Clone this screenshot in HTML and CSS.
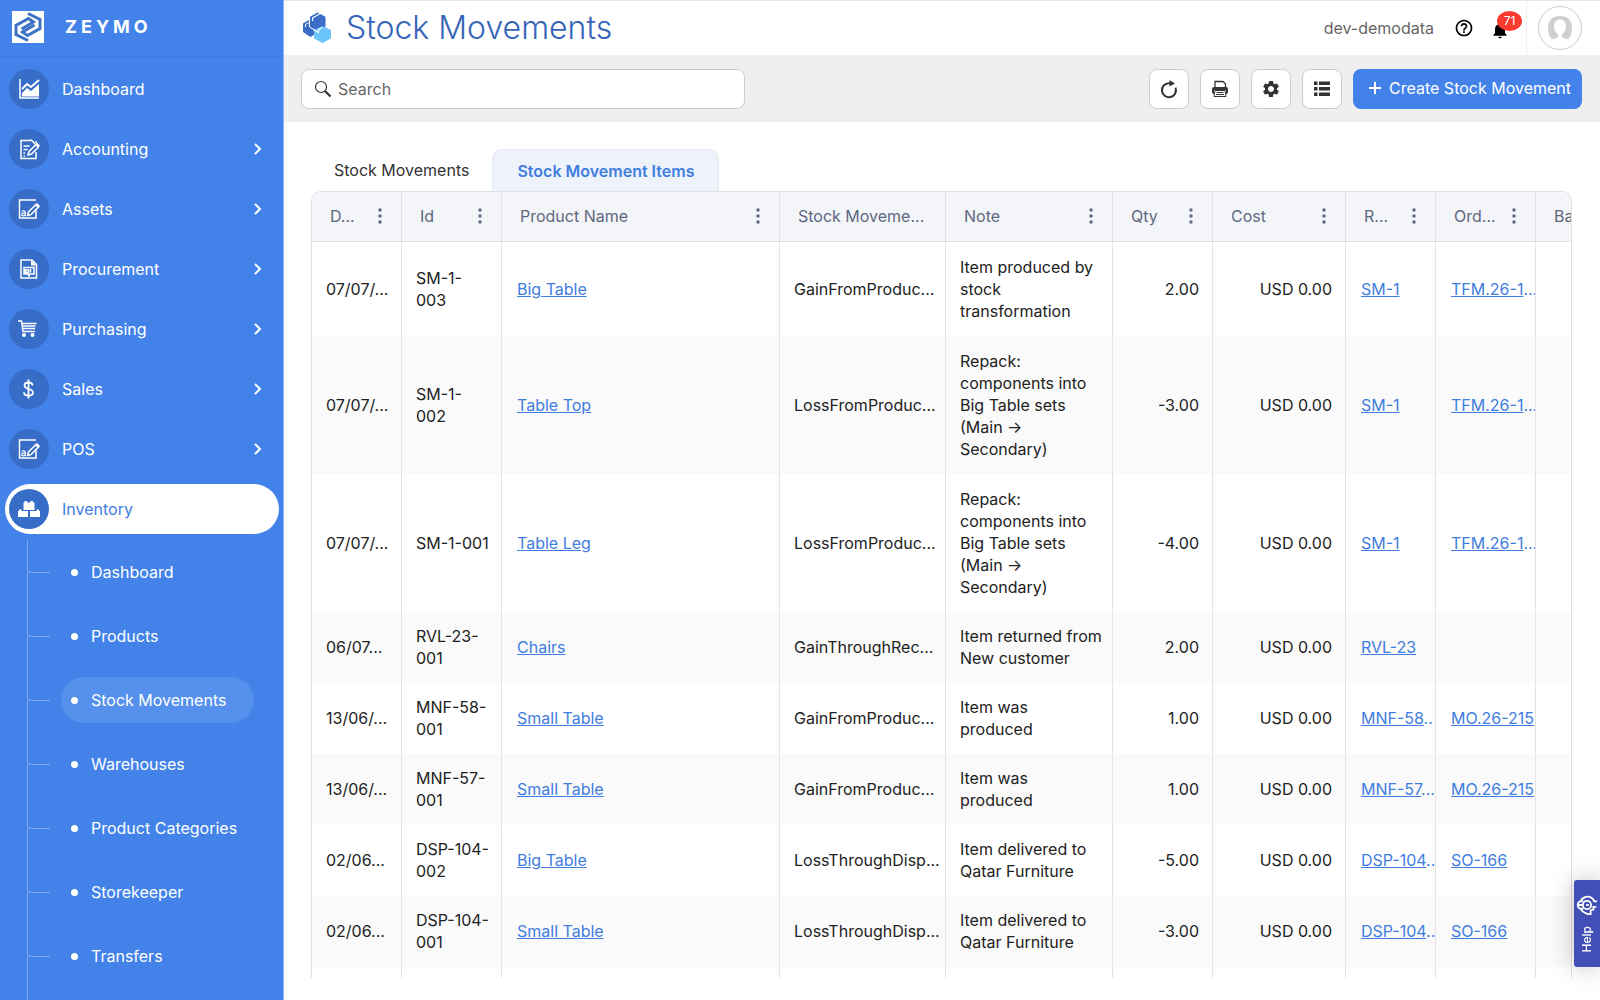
FILE: index.html
```html
<!DOCTYPE html>
<html lang="en">
<head>
<meta charset="utf-8">
<title>Stock Movements - Zeymo</title>
<meta name="viewport" content="width=device-width, initial-scale=1">
<link rel="stylesheet" href="styles.css">
</head>
<body>
<svg class="sprite" aria-hidden="true">
  <symbol id="chevron" viewBox="0 0 10 14"><path d="M2 2l5 5-5 5" fill="none" stroke="currentColor" stroke-width="2"/></symbol>
  <symbol id="sign" viewBox="0 0 22 22"><path d="M18 12v8H1.500V2H18" fill="none" stroke="currentColor" stroke-width="1.500"/><path d="M9.500 17.500l1-3.500 7.500-7.500 2.500 2.500-7.500 7.500z" fill="none" stroke="currentColor" stroke-width="1.500"/><path d="M17 7l2-2 3 3-2 2z" fill="currentColor"/><path d="M4 13.500c1-1 3.300-.8 3.300.8V18M7.300 15.300c-2-.3-3.600.2-3.600 1.400 0 1.700 2.900 1.500 3.600-.2" fill="none" stroke="currentColor" stroke-width="1.200"/></symbol>
  <symbol id="dots" viewBox="0 0 4 16"><circle cx="2" cy="2" r="1.700"/><circle cx="2" cy="8" r="1.700"/><circle cx="2" cy="14" r="1.700"/></symbol>
</svg>
<div class="app">
  <aside class="sidebar">
    <div class="brand">
      <svg class="brand-logo" viewBox="0 0 32 32" aria-hidden="true"><rect width="32" height="32" fill="#fff"/><path d="M16 2.500l12 6v9L15.500 24.500l-5-3.500 12-7M16 29.500l-12-6v-9L16.500 7.500l5 3.500-12 7" fill="none" stroke="#3f72c4" stroke-width="3"/></svg>
      <span class="brand-name">ZEYMO</span>
    </div>
    <nav class="menu">
      <a class="item" href="#"><span class="disc"><svg viewBox="0 0 22 22"><path d="M2 1v19h19" fill="none" stroke="currentColor" stroke-width="1.500"/><path d="M4 11l5-5 4 3 8-7" fill="none" stroke="currentColor" stroke-width="2"/><path d="M4 18.500V15l5-5 4 3 8-7v12.500z" fill="currentColor"/></svg></span><span class="label">Dashboard</span></a>
      <a class="item" href="#"><span class="disc"><svg viewBox="0 0 22 22"><path d="M18 14v6.500H3v-18h10M18 3v2" fill="none" stroke="currentColor" stroke-width="1.500"/><path d="M5.500 8h6M5.500 11.500h4M5.500 15h1.500M5.500 18h1.500" stroke="currentColor" stroke-width="1.500"/><path d="M10 17l1-3.500 7-7 2.500 2.500-7 7zM13 1.500L17 6" fill="none" stroke="currentColor" stroke-width="1.500"/><path d="M17 7l2-2.500 3 3-2 2z" fill="currentColor"/></svg></span><span class="label">Accounting</span><svg class="chev"><use href="#chevron"/></svg></a>
      <a class="item" href="#"><span class="disc"><svg><use href="#sign"/></svg></span><span class="label">Assets</span><svg class="chev"><use href="#chevron"/></svg></a>
      <a class="item" href="#"><span class="disc"><svg viewBox="0 0 22 22"><path d="M3 2h11l4.500 4.500V20H3z" fill="none" stroke="currentColor" stroke-width="1.500"/><path d="M13 2v5.500h5.500z" fill="currentColor"/><path d="M6 9.500h10v6.500h-4l-1 2-1-2H6zM7.500 12h3v2.500h-3zM12.500 11v3.500" fill="none" stroke="currentColor" stroke-width="1.500"/></svg></span><span class="label">Procurement</span><svg class="chev"><use href="#chevron"/></svg></a>
      <a class="item" href="#"><span class="disc"><svg viewBox="0 0 22 22"><path d="M0 3h3.500L5 13.500h12M4.500 5.500h14M5 8h12.500M5.500 10.500h11.500" fill="none" stroke="currentColor" stroke-width="1.500"/><circle cx="6" cy="17" r="2" fill="currentColor"/><circle cx="14.500" cy="17" r="2" fill="currentColor"/></svg></span><span class="label">Purchasing</span><svg class="chev"><use href="#chevron"/></svg></a>
      <a class="item" href="#"><span class="disc"><svg viewBox="0 0 22 22"><path d="M14.500 7.500c0-2-1.800-3-4-3s-4 1-4 3c0 4.500 8.500 2.500 8.500 7 0 2-2 3.200-4.500 3.200s-4.500-1.200-4.500-3.400M10.500 1.500v19" fill="none" stroke="currentColor" stroke-width="1.800"/></svg></span><span class="label">Sales</span><svg class="chev"><use href="#chevron"/></svg></a>
      <a class="item" href="#"><span class="disc"><svg><use href="#sign"/></svg></span><span class="label">POS</span><svg class="chev"><use href="#chevron"/></svg></a>
      <a class="item active" href="#"><span class="disc"><svg viewBox="0 0 22 22"><g fill="currentColor"><path d="M5.500 4.500h1V3H9v1.500h3.500V3H15v1.500h1.500V12h-11zM0 13h1v-1.500h2.500V13h6.500v6H0zM12 13h6.500v-1.500H21V13h1v6H12z"/></g></svg></span><span class="label">Inventory</span></a>
      <div class="submenu">
        <a class="sub" href="#"><span class="sub-label">Dashboard</span></a>
        <a class="sub" href="#"><span class="sub-label">Products</span></a>
        <a class="sub current" href="#"><span class="sub-label">Stock Movements</span></a>
        <a class="sub" href="#"><span class="sub-label">Warehouses</span></a>
        <a class="sub" href="#"><span class="sub-label">Product Categories</span></a>
        <a class="sub" href="#"><span class="sub-label">Storekeeper</span></a>
        <a class="sub" href="#"><span class="sub-label">Transfers</span></a>
        <div class="sub-rest"></div>
      </div>
    </nav>
  </aside>
  <main class="main">
    <header class="header">
      <svg class="title-icon" viewBox="0 0 29 32" aria-hidden="true"><path d="M8.500 7L1 11.500V20l7.500 5 4-2.500V10z" fill="#3a6cc8"/><path d="M3.500 15v-2.500L8 10" fill="none" stroke="#fff"/><path d="M15.500 0L7.500 4.500V15l8 4.500 8.500-4.500V4.500z" fill="#3a6cc8" stroke="#fff"/><path d="M10.500 9V6l8.500-5" fill="none" stroke="#fff" stroke-width="1.200"/><path d="M20.500 14L12 18v8.500l8.500 4.500 8.500-4.500V18z" fill="#6cc5fa"/><path d="M11.500 18l5 2.500v-3l4-2" fill="none" stroke="#fff" stroke-width="1.200"/></svg>
      <h1>Stock Movements</h1>
      <span class="tenant">dev-demodata</span>
      <button class="plain" aria-label="Help"><svg viewBox="0 0 24 24"><path d="M11 18h2v-2h-2v2zm1-16C6.480 2 2 6.480 2 12s4.480 10 10 10 10-4.480 10-10S17.520 2 12 2zm0 18c-4.410 0-8-3.590-8-8s3.590-8 8-8 8 3.590 8 8-3.590 8-8 8zm0-14c-2.210 0-4 1.790-4 4h2c0-1.100.9-2 2-2s2 .9 2 2c0 2-3 1.750-3 5h2c0-2.250 3-2.500 3-5 0-2.210-1.790-4-4-4z"/></svg></button>
      <button class="plain bell" aria-label="Notifications"><svg viewBox="0 0 24 24"><path d="M12 22c1.100 0 2-.9 2-2h-4c0 1.100.89 2 2 2zm6-6v-5c0-3.070-1.640-5.640-4.500-6.320V4c0-.83-.67-1.500-1.500-1.500s-1.500.67-1.500 1.500v.68C7.630 5.360 6 7.920 6 11v5l-2 2v1h16v-1l-2-2z"/></svg><span class="badge">71</span></button>
      <div class="user"><button class="avatar" aria-label="Account"><svg viewBox="0 0 26 26"><path d="M13 1C5 1 1 6 1 13c0 5 1 8 3.500 11 2 .5 4-.5 6-1.500 1-1 .8-2 .3-3.500-2.300-2-3.800-4-3.800-8 0-4 2.500-6.500 6-6.500s6 2.500 6 6.500c0 4-1.500 6-3.800 8-.5 1.500-.7 2.500.3 3.500 2 1 4 2 6 1.500C24 21 25 18 25 13 25 6 21 1 13 1z" fill="#cfcfcf"/></svg></button></div>
    </header>
    <div class="toolbar">
      <label class="search"><svg viewBox="0 0 18 18" aria-hidden="true"><circle cx="7" cy="7" r="5.500" fill="none" stroke="#333" stroke-width="1.200"/><path d="M11 11l5.500 5.500" stroke="#333" stroke-width="2.200"/></svg><input type="text" placeholder="Search" aria-label="Search"></label>
      <div class="actions">
        <button class="square" aria-label="Refresh"><svg viewBox="0 0 20 20"><path d="M11.500 4.200H10a7 7 0 1 0 6.500 4.500" fill="none" stroke="currentColor" stroke-width="2"/><path d="M10.500 1l5.500 3.500-5.500 3z"/></svg></button>
        <button class="square" aria-label="Print"><svg viewBox="0 0 20 20"><path d="M5 8V2.500h8l2.500 2.500v3" fill="none" stroke="currentColor" stroke-width="1.300"/><path d="M2 10q0-2 2-2h12q2 0 2 2v3q0 2-2 2v-4H4v4q-2 0-2-2z"/><path d="M5 11.500h10l1 6H4zM6.500 13.500h7M6 15.500h8" fill="none" stroke="currentColor" stroke-width="1"/></svg></button>
        <button class="square" aria-label="Settings"><svg viewBox="0 0 24 24"><path d="M19.140 12.940c.04-.3.060-.61.060-.94 0-.32-.02-.64-.07-.94l2.030-1.580c.18-.14.230-.41.120-.61l-1.920-3.320c-.12-.22-.37-.29-.59-.22l-2.390.96c-.5-.38-1.030-.7-1.620-.94l-.36-2.540c-.04-.24-.24-.41-.48-.41h-3.840c-.24 0-.43.170-.47.410l-.36 2.540c-.59.240-1.130.570-1.620.94l-2.390-.96c-.22-.08-.47 0-.59.220L2.740 8.870c-.12.210-.08.470.120.610l2.030 1.580c-.05.300-.09.630-.09.940s.02.640.070.940l-2.030 1.580c-.18.140-.23.410-.12.610l1.920 3.320c.12.220.37.290.59.220l2.390-.96c.5.380 1.030.7 1.620.94l.36 2.540c.05.240.24.410.48.410h3.840c.24 0 .44-.17.470-.41l.36-2.540c.59-.24 1.130-.56 1.620-.94l2.390.96c.22.080.47 0 .59-.22l1.920-3.320c.12-.22.070-.47-.12-.61l-2.010-1.580zM12 15.600c-1.980 0-3.600-1.620-3.600-3.600s1.620-3.600 3.600-3.600 3.600 1.620 3.600 3.600-1.620 3.600-3.600 3.600z"/></svg></button>
        <button class="square" aria-label="List view"><svg viewBox="0 0 20 20"><path d="M2 2.500h3.500v3.500H2zM7 2.500h11v3.500H7zM2 8h3.500v3.500H2zM7 8h11v3.500H7zM2 13.500h3.500V17H2zM7 13.500h11V17H7z"/></svg></button>
        <button class="create"><svg viewBox="0 0 12 12" aria-hidden="true"><path d="M6 0v12M0 6h12" stroke="currentColor" stroke-width="2"/></svg>Create Stock Movement</button>
      </div>
    </div>
    <section class="content">
      <div class="tabs" role="tablist">
        <button class="tab" role="tab">Stock Movements</button>
        <button class="tab selected" role="tab" aria-selected="true">Stock Movement Items</button>
      </div>
      <div class="grid">
        <table>
          <colgroup><col class="w-date"><col class="w-id"><col class="w-product"><col class="w-type"><col class="w-note"><col class="w-qty"><col class="w-cost"><col class="w-ref"><col class="w-order"><col class="w-batch"></colgroup>
          <thead>
            <tr>
              <th><div class="th">D...<svg><use href="#dots"/></svg></div></th>
              <th><div class="th">Id<svg><use href="#dots"/></svg></div></th>
              <th><div class="th">Product Name<svg><use href="#dots"/></svg></div></th>
              <th><div class="th">Stock Moveme...</div></th>
              <th><div class="th">Note<svg><use href="#dots"/></svg></div></th>
              <th><div class="th">Qty<svg><use href="#dots"/></svg></div></th>
              <th><div class="th">Cost<svg><use href="#dots"/></svg></div></th>
              <th><div class="th">R...<svg><use href="#dots"/></svg></div></th>
              <th><div class="th">Ord...<svg><use href="#dots"/></svg></div></th>
              <th><div class="th">Ba</div></th>
            </tr>
          </thead>
          <tbody>
            <tr class="lines-3"><td class="cut">07/07/...</td><td>SM-1-003</td><td class="ref"><a href="#">Big Table</a></td><td class="cut">GainFromProduc...</td><td>Item produced by stock transformation</td><td class="num">2.00</td><td class="num">USD 0.00</td><td class="ref"><a href="#">SM-1</a></td><td class="ref"><a href="#">TFM.26-1</a>...</td><td></td></tr>
            <tr class="lines-5"><td class="cut">07/07/...</td><td>SM-1-002</td><td class="ref"><a href="#">Table Top</a></td><td class="cut">LossFromProduc...</td><td>Repack: components into Big Table sets (Main → Secondary)</td><td class="num">-3.00</td><td class="num">USD 0.00</td><td class="ref"><a href="#">SM-1</a></td><td class="ref"><a href="#">TFM.26-1</a>...</td><td></td></tr>
            <tr class="lines-5"><td class="cut">07/07/...</td><td class="cut">SM-1-001</td><td class="ref"><a href="#">Table Leg</a></td><td class="cut">LossFromProduc...</td><td>Repack: components into Big Table sets (Main → Secondary)</td><td class="num">-4.00</td><td class="num">USD 0.00</td><td class="ref"><a href="#">SM-1</a></td><td class="ref"><a href="#">TFM.26-1</a>...</td><td></td></tr>
            <tr><td class="cut">06/07...</td><td>RVL-23-001</td><td class="ref"><a href="#">Chairs</a></td><td class="cut">GainThroughRec...</td><td>Item returned from New customer</td><td class="num">2.00</td><td class="num">USD 0.00</td><td class="ref"><a href="#">RVL-23</a></td><td></td><td></td></tr>
            <tr><td class="cut">13/06/...</td><td>MNF-58-001</td><td class="ref"><a href="#">Small Table</a></td><td class="cut">GainFromProduc...</td><td>Item was produced</td><td class="num">1.00</td><td class="num">USD 0.00</td><td class="ref"><a href="#">MNF-58</a>..</td><td class="ref"><a href="#">MO.26-215</a></td><td></td></tr>
            <tr><td class="cut">13/06/...</td><td>MNF-57-001</td><td class="ref"><a href="#">Small Table</a></td><td class="cut">GainFromProduc...</td><td>Item was produced</td><td class="num">1.00</td><td class="num">USD 0.00</td><td class="ref"><a href="#">MNF-57</a>...</td><td class="ref"><a href="#">MO.26-215</a></td><td></td></tr>
            <tr><td class="cut">02/06...</td><td>DSP-104-002</td><td class="ref"><a href="#">Big Table</a></td><td class="cut">LossThroughDisp...</td><td>Item delivered to Qatar Furniture</td><td class="num">-5.00</td><td class="num">USD 0.00</td><td class="ref"><a href="#">DSP-104</a>..</td><td class="ref"><a href="#">SO-166</a></td><td></td></tr>
            <tr><td class="cut">02/06...</td><td>DSP-104-001</td><td class="ref"><a href="#">Small Table</a></td><td class="cut">LossThroughDisp...</td><td>Item delivered to Qatar Furniture</td><td class="num">-3.00</td><td class="num">USD 0.00</td><td class="ref"><a href="#">DSP-104</a>..</td><td class="ref"><a href="#">SO-166</a></td><td></td></tr>
            <tr><td></td><td></td><td></td><td></td><td></td><td></td><td></td><td></td><td></td><td></td></tr>
          </tbody>
        </table>
      </div>
    </section>
  </main>
</div>
<button class="help"><span>Help</span><svg viewBox="0 0 24 24" aria-hidden="true"><g fill="none" stroke="currentColor" stroke-width="2"><path d="M5 8C7 3 14 1 18 5l2 3h3M5 16c2 4 5 5 8 6h3v-4l3-1v-3h3M8 8H5a3 4 0 0 0 0 8h3M1 12h6"/><circle cx="12" cy="12" r="4.500"/><path d="M11 12h3"/></g></svg></button>
</body>
</html>
```
FILE: styles.css
```css
* { box-sizing: border-box; }
body {
  margin: 0;
  font: 16px/22px Inter, "Noto Sans", sans-serif;
  color: #222;
  background: #fff;
}
button, input { font: inherit; color: inherit; }
button { cursor: pointer; }
a { color: inherit; }
.sprite { display: none; }

.app { display: flex; height: 100vh; overflow: hidden; }

/* Sidebar */
.sidebar {
  flex: none;
  width: 284px;
  overflow: hidden;
  color: #fff;
  background: #4282e9;
  border-right: 1px solid #8ab3f3;
}
.brand {
  display: flex;
  align-items: center;
  gap: 21px;
  height: 57px;
  padding: 0 12px 2px;
  border-bottom: 1px solid #3d7be0;
}
.brand-logo { width: 32px; height: 32px; }
.brand-name { font-size: 18px; font-weight: 700; letter-spacing: 4px; }
.menu { padding: 2px 4px 0 5px; }
.item {
  display: flex;
  align-items: center;
  height: 50px;
  margin: 5px 0 10px;
  padding: 0 16px 0 4px;
  border-radius: 25px;
  text-decoration: none;
}
.item.active { color: #3f7de0; background: #fff; margin-bottom: 6px; }
.disc {
  display: grid;
  place-items: center;
  width: 40px;
  height: 40px;
  border-radius: 50%;
  color: #fff;
  background: #376dc6;
}
.disc svg { width: 22px; height: 22px; }
.label { flex: 1; padding-left: 13px; }
.chev { width: 10px; height: 14px; }

.submenu { padding-left: 22px; }
.sub {
  position: relative;
  display: flex;
  align-items: center;
  height: 64px;
  padding-left: 34px;
  text-decoration: none;
}
.sub::before {
  content: "";
  position: absolute;
  left: 0;
  top: -32px;
  width: 22px;
  height: 64px;
  border: solid #7fabf1;
  border-width: 0 0 1px 1px;
  border-bottom-left-radius: 4px;
}
.sub:first-child::before { top: 0; height: 32px; }
.sub-label {
  display: flex;
  align-items: center;
  gap: 13px;
  height: 46px;
  padding: 0 28px 0 10px;
  border-radius: 23px;
}
.sub-label::before { content: ""; width: 7px; height: 7px; border-radius: 50%; background: #fff; }
.current .sub-label { background: #5490ec; }
.sub-rest { height: 64px; margin-top: -32px; border-left: 1px solid #7fabf1; }

/* Header */
.main { flex: 1; min-width: 0; display: flex; flex-direction: column; }
.header {
  display: flex;
  align-items: center;
  height: 55px;
  padding-left: 18px;
  border-top: 1px solid #e6e6e6;
}
.title-icon { width: 29px; height: 32px; margin-right: 15px; }
h1 { flex: 1; margin: 0; font-size: 32px; line-height: 40px; font-weight: 300; color: #3565b8; }
.tenant { margin-right: 20px; color: #666; }
.plain { display: flex; position: relative; padding: 0; border: 0; background: none; color: #000; }
.plain svg { width: 20px; height: 20px; fill: currentColor; }
.bell { margin: 4px 16px 0; }
.badge {
  position: absolute;
  left: 7px;
  top: -9px;
  width: 25px;
  height: 20px;
  border-radius: 50%;
  font-size: 12px;
  line-height: 20px;
  color: #fff;
  background: #fb3a30;
}
.user { display: flex; align-items: center; padding: 0 18px 0 11px; height: 54px; border-left: 1px solid #eee; }
.avatar { display: grid; place-items: center; width: 44px; height: 44px; padding: 0; border: 1px solid #ccc; border-radius: 50%; background: #fff; }
.avatar svg { width: 26px; height: 26px; }

/* Toolbar */
.toolbar { display: flex; justify-content: space-between; align-items: flex-start; height: 67px; padding: 14px 18px 0 17px; background: #efefef; }
.search { display: flex; align-items: center; gap: 6px; width: 444px; height: 40px; padding: 0 12px; border: 1px solid #ccc; border-radius: 8px; background: #fff; }
.search svg { width: 18px; height: 18px; }
.search input { flex: 1; min-width: 0; padding: 0; border: 0; outline: 0; background: none; }
.search input::placeholder { color: #666; opacity: 1; }
.actions { display: flex; gap: 11px; }
.square { display: grid; place-items: center; width: 40px; height: 40px; padding: 0; border: 1px solid #ccc; border-radius: 8px; background: #fff; color: #333; }
.square svg { width: 20px; height: 20px; fill: currentColor; }
.create { display: flex; align-items: center; gap: 8px; height: 40px; padding: 0 11px 2px 16px; border: 0; border-radius: 8px; color: #fff; background: #4282e9; }
.create svg { width: 12px; height: 12px; }

/* Tabs and grid */
.content { flex: 1; min-height: 0; display: flex; flex-direction: column; padding: 27px 28px 22px 27px; }
.tabs { display: flex; }
.tab { height: 42px; padding: 0 22px 2px; border: 1px solid transparent; border-bottom: 0; border-radius: 10px 10px 0 0; background: none; color: #333; }
.tab.selected { padding: 0 24px; font-weight: 600; color: #3f7de0; background: #eef2fb; border-color: #e4e8f0; }
.grid { flex: 1; min-height: 0; overflow: hidden; border: solid #e0e0e0; border-width: 1px 1px 0; border-radius: 10px 10px 0 0; }
table { width: 1352px; table-layout: fixed; border-collapse: separate; border-spacing: 0; }
.w-date { width: 90px; }
.w-id, .w-qty, .w-order { width: 100px; }
.w-product { width: 278px; }
.w-type { width: 166px; }
.w-note { width: 167px; }
.w-cost { width: 133px; }
.w-ref { width: 90px; }
.w-batch { width: 128px; }
th { height: 50px; padding: 0 19px 1px 18px; font-weight: 400; text-align: left; color: #5d6880; background: #f4f5f8; border: solid #dfe0e3; border-width: 0 1px 1px 0; white-space: nowrap; }
.th { display: flex; justify-content: space-between; align-items: center; }
.th svg { flex: none; width: 4px; height: 16px; fill: #5d6880; }
td { height: 71px; padding: 0 10px 1px 14px; border-right: 1px solid #e4e4e4; overflow: hidden; }
.lines-3 td { height: 94px; }
.lines-5 td { height: 138px; }
tbody tr:nth-child(even) { background: #fafafa; }
.cut { white-space: nowrap; }
.num { padding-right: 13px; text-align: right; }
.ref { padding: 0 0 1px 15px; white-space: nowrap; color: #3f7de0; }

/* Help tab */
.help {
  position: fixed;
  right: 0;
  bottom: 33px;
  display: flex;
  align-items: center;
  justify-content: center;
  gap: 10px;
  writing-mode: sideways-lr;
  width: 26px;
  height: 87px;
  padding: 0;
  border: 0;
  border-radius: 3px 0 0 3px;
  font-size: 12px;
  line-height: 16px;
  font-weight: 500;
  color: #fff;
  background: #414fb7;
  box-shadow: 0 0 24px rgba(0, 0, 0, .25);
}
.help svg { width: 22px; height: 22px; }
```
